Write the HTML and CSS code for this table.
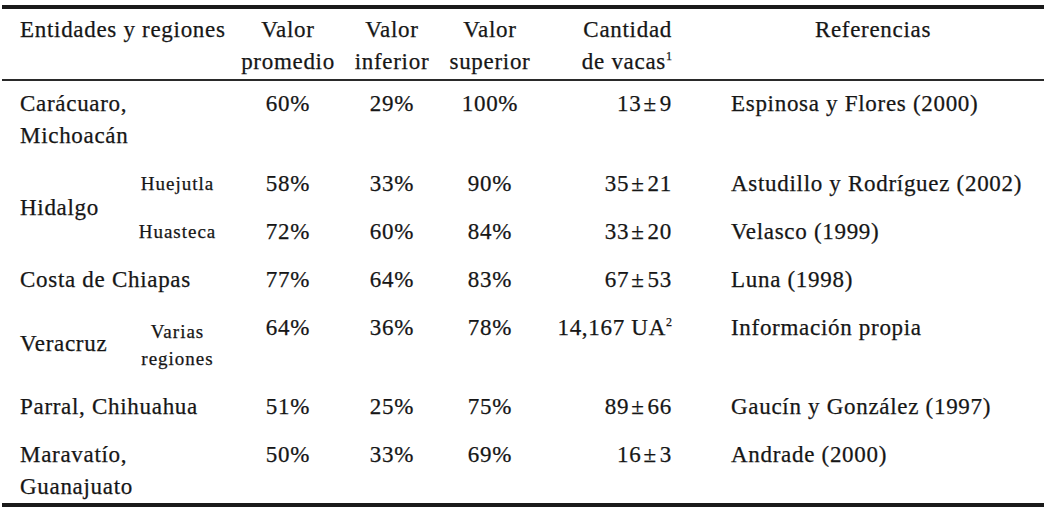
FILE: index.html
```html
<!DOCTYPE html>
<html lang="es">
<head>
<meta charset="utf-8">
<title>Tabla</title>
<link rel="stylesheet" href="styles.css">
</head>
<body>
<table class="tbl">
  <colgroup>
    <col class="c-ent"><col class="c-sub"><col class="c-prom"><col class="c-inf"><col class="c-sup"><col class="c-cant"><col class="c-ref">
  </colgroup>
  <thead>
    <tr>
      <th class="h-ent" colspan="2">Entidades y regiones</th>
      <th class="num">Valor<br>promedio</th>
      <th class="num">Valor<br>inferior</th>
      <th class="num">Valor<br>superior</th>
      <th class="cant">Cantidad<br>de vacas<sup class="sup">1</sup></th>
      <th class="h-ref">Referencias</th>
    </tr>
  </thead>
  <tbody>
    <tr class="first">
      <td class="ent" colspan="2">Carácuaro,<br>Michoacán</td>
      <td class="num">60%</td><td class="num">29%</td><td class="num">100%</td>
      <td class="cant">13<span class="pm">±</span>9</td><td class="ref">Espinosa y Flores (2000)</td>
    </tr>
    <tr>
      <td class="ent mid" rowspan="2">Hidalgo</td>
      <td class="sub">Huejutla</td>
      <td class="num">58%</td><td class="num">33%</td><td class="num">90%</td>
      <td class="cant">35<span class="pm">±</span>21</td><td class="ref">Astudillo y Rodríguez (2002)</td>
    </tr>
    <tr>
      <td class="sub">Huasteca</td>
      <td class="num">72%</td><td class="num">60%</td><td class="num">84%</td>
      <td class="cant">33<span class="pm">±</span>20</td><td class="ref">Velasco (1999)</td>
    </tr>
    <tr class="costa">
      <td class="ent" colspan="2">Costa de Chiapas</td>
      <td class="num">77%</td><td class="num">64%</td><td class="num">83%</td>
      <td class="cant">67<span class="pm">±</span>53</td><td class="ref">Luna (1998)</td>
    </tr>
    <tr class="vera">
      <td class="ent mid">Veracruz</td>
      <td class="sub two">Varias<br>regiones</td>
      <td class="num">64%</td><td class="num">36%</td><td class="num">78%</td>
      <td class="cant">14,167 UA<sup class="sup">2</sup></td><td class="ref">Información propia</td>
    </tr>
    <tr>
      <td class="ent" colspan="2">Parral, Chihuahua</td>
      <td class="num">51%</td><td class="num">25%</td><td class="num">75%</td>
      <td class="cant">89<span class="pm">±</span>66</td><td class="ref">Gaucín y González (1997)</td>
    </tr>
    <tr class="last">
      <td class="ent" colspan="2">Maravatío,<br>Guanajuato</td>
      <td class="num">50%</td><td class="num">33%</td><td class="num">69%</td>
      <td class="cant">16<span class="pm">±</span>3</td><td class="ref">Andrade (2000)</td>
    </tr>
  </tbody>
</table>
</body>
</html>
```

FILE: styles.css
```css
html, body {
  margin: 0;
  padding: 0;
  background: #ffffff;
}

body {
  padding: 5px 0 0 2px;
  font-family: "Liberation Serif", "Times New Roman", serif;
  color: #161616;
}

.tbl {
  width: 1042px;
  table-layout: fixed;
  border-collapse: collapse;
  border-top: 4px solid #1a1a1a;
  border-bottom: 4px solid #1a1a1a;
  font-size: 23px;
  letter-spacing: 0.7px;
  line-height: 32px;
  -webkit-text-stroke: 0.25px #161616;
}

.c-ent { width: 118px; }
.c-sub { width: 115px; }
.c-prom { width: 106px; }
.c-inf { width: 102px; }
.c-sup { width: 94px; }
.c-cant { width: 153px; }
.c-ref { width: 354px; }

th, td {
  padding: 8px 0;
  vertical-align: top;
  font-weight: normal;
  white-space: nowrap;
}

thead th {
  padding: 5px 0 1px;
  border-bottom: 2px solid #2a2a2a;
}

.h-ent { text-align: left; padding-left: 18px; }
.h-ref { text-align: center; padding-left: 41px; padding-right: 29px; }

.num { text-align: center; }
.cant { text-align: right; padding-right: 18px; }
.ent { text-align: left; padding-left: 18px; }
.ref { text-align: left; padding-left: 41px; }

.mid { vertical-align: middle; }

.pm {
  display: inline-block;
  margin: 0 3px 0 2px;
}

.sub {
  text-align: center;
  font-size: 19px;
  letter-spacing: 1px;
}

.sub.two {
  line-height: 27px;
  padding-top: 14px;
  padding-bottom: 11px;
}

tr.first td { padding-top: 7px; }
tr.last td { padding-bottom: 0; }

.sup {
  font-size: 12px;
  line-height: 0;
  vertical-align: 9px;
  letter-spacing: 0;
}
```
